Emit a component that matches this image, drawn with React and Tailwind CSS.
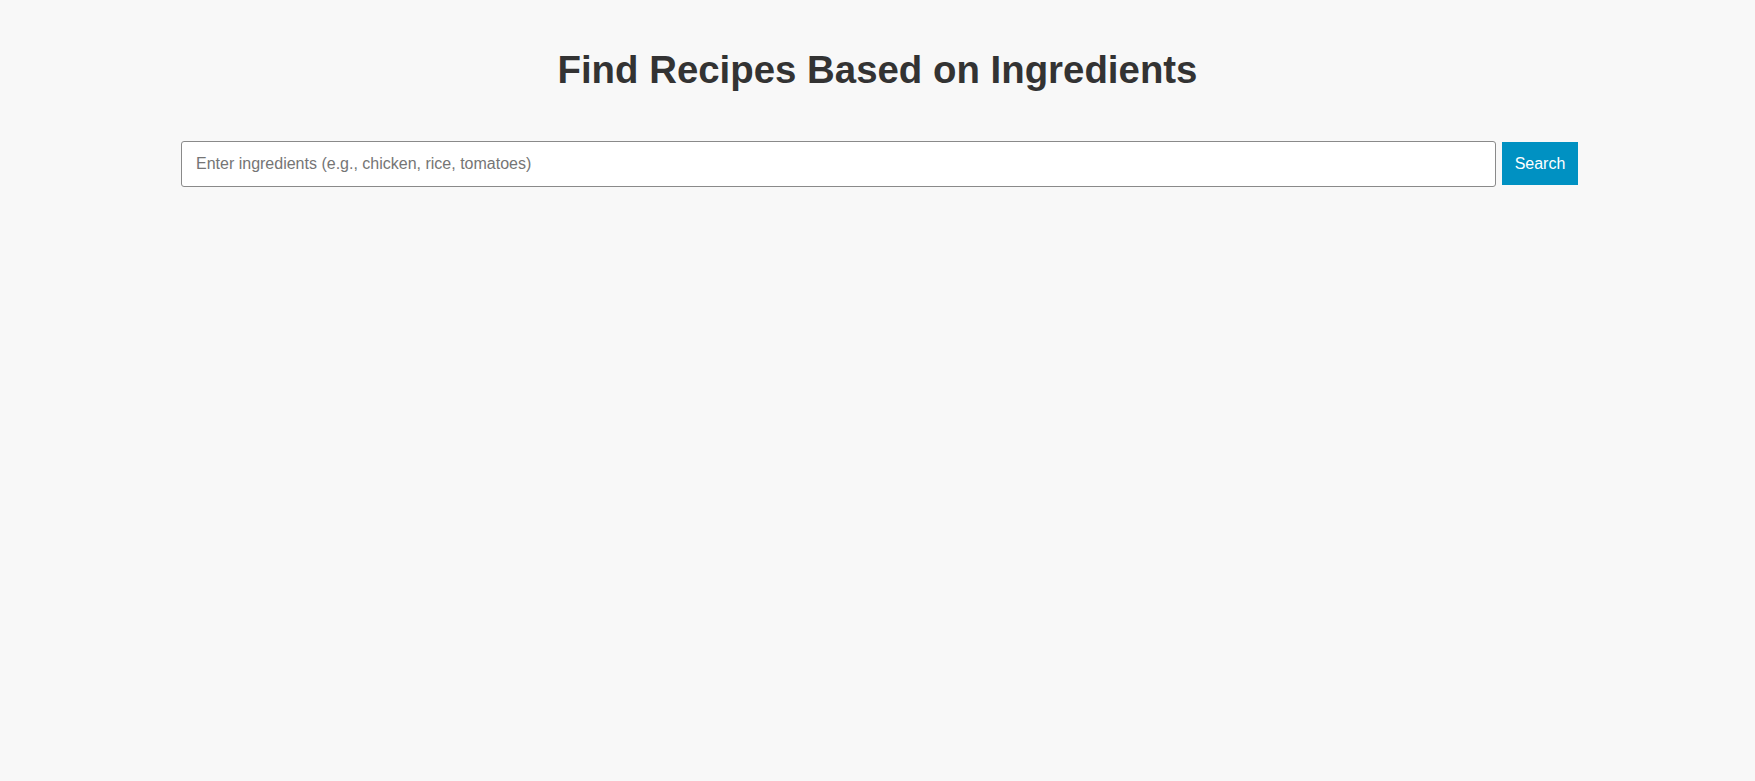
export default function App() {
  return (
    <div className="min-h-screen w-full bg-[#f8f8f8] font-['Liberation_Sans',Arial,sans-serif] text-[#333333]">
      <div className="pt-[41px]">
        <h1 className="text-center text-[38.4px] font-bold leading-normal text-[#333333]">
          Find Recipes Based on Ingredients
        </h1>
      </div>

      <div className="mt-[42px] flex items-center gap-[6px] pl-[181px] pr-[177px]">
        <input
          type="text"
          placeholder="Enter ingredients (e.g., chicken, rice, tomatoes)"
          className="h-[46px] flex-1 rounded-[3px] border border-[#8a8a8a] bg-white px-[14px] text-[16px] text-[#333333] placeholder-[#757575] focus:outline-none"
        />
        <button className="h-[43px] w-[76px] bg-[#0091c2] text-[16px] text-white">
          Search
        </button>
      </div>
    </div>
  );
}
